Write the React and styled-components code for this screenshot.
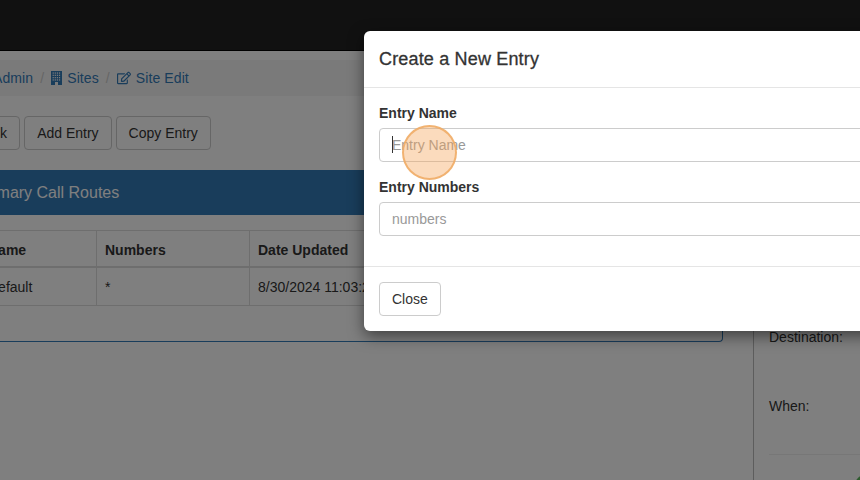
import React from 'react';
import styled, { createGlobalStyle } from 'styled-components';
import { FaRegEdit } from 'react-icons/fa';

const Global = createGlobalStyle`
  html, body {
    margin: 0;
    padding: 0;
    background: #fff;
  }
  body {
    font-family: "Liberation Sans", Arial, sans-serif;
    font-size: 14px;
    line-height: 20px;
    color: #333;
  }
`;

const Page = styled.div`
  position: relative;
  width: 860px;
  height: 480px;
  overflow: hidden;
  background: #fff;
`;

const Navbar = styled.div`
  height: 51px;
  background: #222;
  border-bottom: 1px solid #000;
  box-sizing: border-box;
`;

const Body = styled.div`
  display: flex;
  margin-left: -30px;
  height: 429px;
`;

const Main = styled.div`
  flex: 0 0 783px;
  width: 783px;
  padding-top: 9px;
  padding-right: 30px;
  box-sizing: border-box;
`;

const Breadcrumb = styled.div`
  display: flex;
  align-items: center;
  gap: 7px;
  height: 36px;
  background: #f5f5f5;
  padding-left: 23px;
  margin-right: -400px;
  letter-spacing: 0.1px;
`;

const Crumb = styled.a`
  display: flex;
  align-items: center;
  gap: 5px;
  color: #337ab7;
  svg {
    font-size: 14px;
  }
`;

const Sep = styled.span`
  color: #ccc;
`;

const Toolbar = styled.div`
  display: flex;
  gap: 4px;
  margin: 20px 0 0 -7px;
`;

const Button = styled.button`
  height: 34px;
  padding: 0 12px;
  font: inherit;
  color: #333;
  background: #fff;
  border: 1px solid #ccc;
  border-radius: 4px;
`;

const Panel = styled.div`
  margin-top: 20px;
  height: 172px;
  border: 1px solid #337ab7;
  border-top: 0;
  border-radius: 4px;
  box-sizing: border-box;
`;

const PanelHeading = styled.div`
  height: 45px;
  display: flex;
  align-items: center;
  padding-left: 6px;
  background: #337ab7;
  color: #fff;
  font-size: 16px;
`;

const Table = styled.table`
  margin: 15px 0 0 0;
  border-collapse: collapse;
  width: 100%;
  table-layout: fixed;
  th, td {
    border: 1px solid #ddd;
    padding: 9px 8px 6px;
    text-align: left;
    vertical-align: top;
    white-space: nowrap;
    overflow: hidden;
    box-sizing: border-box;
  }
  th:first-child, td:first-child {
    padding-left: 16px;
  }
  th {
    height: 34px;
    border-bottom-width: 2px;
    font-weight: bold;
  }
  td {
    height: 38px;
  }
`;

const Aside = styled.div`
  flex: 1;
  border-left: 1px solid #bbb;
  padding: 276px 0 0 15px;
`;

const AsideLabel = styled.div`
  height: ${(p) => p.$h}px;
  white-space: nowrap;
`;

const Rule = styled.div`
  height: 1px;
  background: #eee;
  margin-right: -20px;
`;

const Dot = styled.div`
  position: absolute;
  left: 855px;
  top: 475px;
  width: 20px;
  height: 20px;
  border-radius: 50%;
  background: #5cb85c;
`;

const Backdrop = styled.div`
  position: absolute;
  inset: 0;
  background: rgba(0, 0, 0, 0.5);
`;

const Modal = styled.div`
  position: absolute;
  left: 364px;
  top: 31px;
  width: 600px;
  height: 300px;
  background: #fff;
  border-radius: 6px;
  box-shadow: 0 5px 15px rgba(0, 0, 0, 0.5);
  display: flex;
  flex-direction: column;
`;

const ModalHeader = styled.div`
  height: 57px;
  box-sizing: border-box;
  border-bottom: 1px solid #e5e5e5;
  display: flex;
  align-items: center;
  padding-left: 15px;
`;

const ModalTitle = styled.h4`
  margin: 0;
  font-size: 18px;
  font-weight: 500;
  color: #333;
  letter-spacing: 0.17px;
  -webkit-text-stroke: 0.3px #333;
`;

const ModalBody = styled.div`
  height: 179px;
  box-sizing: border-box;
  padding: 15px;
`;

const Field = styled.div`
  margin-bottom: 15px;
`;

const Label = styled.label`
  display: block;
  font-weight: bold;
  margin-bottom: 5px;
`;

const InputWrap = styled.div`
  position: relative;
`;

const Input = styled.input`
  display: block;
  width: 100%;
  height: 34px;
  box-sizing: border-box;
  padding: 6px 12px;
  font: inherit;
  color: #555;
  background: #fff;
  border: 1px solid #ccc;
  border-radius: 4px;
  outline: none;
  &::placeholder {
    color: #999;
    opacity: 1;
  }
`;

const Caret = styled.span`
  position: absolute;
  left: 13px;
  top: 8px;
  width: 1px;
  height: 17px;
  background: #333;
`;

const ModalFooter = styled.div`
  flex: 1;
  border-top: 1px solid #e5e5e5;
  padding: 15px;
`;

const ClickMark = styled.div`
  position: absolute;
  left: 402px;
  top: 125px;
  width: 55px;
  height: 55px;
  box-sizing: border-box;
  border-radius: 50%;
  background: rgba(245, 166, 90, 0.4);
  border: 2px solid rgba(240, 170, 100, 0.85);
`;

// solid tower with a grid of small windows and a door, like the old FA building glyph
const BuildingIcon = () => {
  const windows = [];
  for (let row = 0; row < 4; row++) {
    for (let col = 0; col < 4; col++) {
      windows.push(<rect key={`${row}-${col}`} x={1.6 + col * 2.1} y={1.4 + row * 2.3} width="1.2" height="1.3" fill="#f5f5f5" />);
    }
  }
  return (
    <svg width="11" height="14" viewBox="0 0 11 14">
      <rect width="11" height="14" fill="#337ab7" />
      {windows}
      <rect x="4" y="11" width="3" height="3" fill="#f5f5f5" />
    </svg>
  );
};

export default function App() {
  return (
    <Page>
      <Global />
      <Navbar />
      <Body>
        <Main>
          <Breadcrumb>
            <Crumb>Admin</Crumb>
            <Sep>/</Sep>
            <Crumb><BuildingIcon />Sites</Crumb>
            <Sep>/</Sep>
            <Crumb><FaRegEdit />Site Edit</Crumb>
          </Breadcrumb>
          <Toolbar>
            <Button>Back</Button>
            <Button>Add Entry</Button>
            <Button>Copy Entry</Button>
          </Toolbar>
          <Panel>
            <PanelHeading>Primary Call Routes</PanelHeading>
            <Table>
              <colgroup>
                <col width="125" />
                <col width="153" />
                <col />
              </colgroup>
              <thead>
                <tr><th>Name</th><th>Numbers</th><th>Date Updated</th></tr>
              </thead>
              <tbody>
                <tr><td>Default</td><td>*</td><td>8/30/2024 11:03:21 AM</td></tr>
              </tbody>
            </Table>
          </Panel>
        </Main>
        <Aside>
          <AsideLabel $h={69}>Destination:</AsideLabel>
          <AsideLabel $h={58}>When:</AsideLabel>
          <Rule />
        </Aside>
      </Body>
      <Dot />
      <Backdrop />
      <Modal>
        <ModalHeader>
          <ModalTitle>Create a New Entry</ModalTitle>
        </ModalHeader>
        <ModalBody>
          <Field>
            <Label>Entry Name</Label>
            <InputWrap>
              <Input placeholder="Entry Name" readOnly />
              <Caret />
            </InputWrap>
          </Field>
          <Field>
            <Label>Entry Numbers</Label>
            <Input placeholder="numbers" readOnly />
          </Field>
        </ModalBody>
        <ModalFooter>
          <Button>Close</Button>
        </ModalFooter>
      </Modal>
      <ClickMark />
    </Page>
  );
}
